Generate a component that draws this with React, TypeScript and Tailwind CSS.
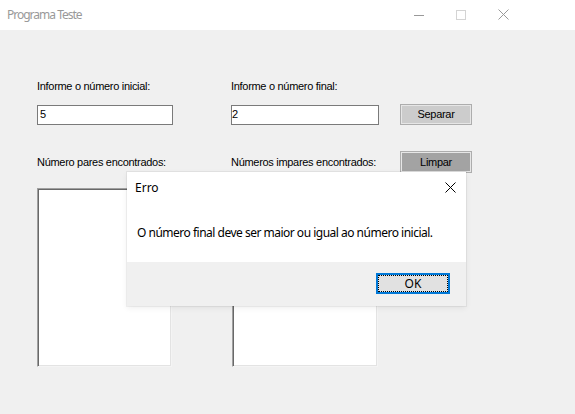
import React from "react";

const sans = { fontFamily: '"Liberation Sans", Arial, sans-serif' };
const ui = { fontFamily: '"Noto Sans", "Open Sans", sans-serif' };

function WinButton({ label, dark }: { label: string; dark?: boolean }) {
  return (
    <div
      className={`w-[72px] flex items-center justify-center border border-[#adadad] shadow-[inset_0_0_0_1px_#e6e6e6] text-[11px] tracking-[-0.3px] text-black ${
        dark ? "h-[22px] bg-[#a3a3a3]" : "h-[21px] bg-[#cccccc]"
      }`}
    >
      {label}
    </div>
  );
}

function ListBox({ w }: { w: string }) {
  return (
    <div
      className={`${w} h-[179px] bg-white border border-t-[#a0a0a0] border-l-[#a0a0a0] border-r-[#f4f4f4] border-b-[#f4f4f4] shadow-[inset_1px_1px_0_#696969,inset_-1px_-1px_0_#e3e3e3]`}
    />
  );
}

export default function App() {
  return (
    <div className="relative w-[575px] h-[414px] bg-[#f0f0f0] overflow-hidden" style={sans}>
      {/* title bar */}
      <div className="h-[30px] bg-white flex items-center">
        <span className="pl-[7px] text-[12px] tracking-[-1px] text-[#999999]" style={ui}>
          Programa Teste
        </span>
        <div className="ml-auto mr-[51px] flex h-full">
          <div className="w-[42px] h-full flex items-center justify-center">
            <div className="w-[10px] h-px bg-[#999999]" />
          </div>
          <div className="w-[42px] h-full flex items-center justify-center">
            <div className="w-[10px] h-[10px] border border-[#d4d4d4] mt-[-1px]" />
          </div>
          <div className="w-[42px] h-full flex items-center justify-center">
            <svg width="11" height="11" viewBox="0 0 11 11" className="mt-[-1px]">
              <path d="M0.5 0.5L10.5 10.5M10.5 0.5L0.5 10.5" stroke="#999999" strokeWidth="1" />
            </svg>
          </div>
        </div>
      </div>

      {/* form body */}
      <div className="pl-[37px] pt-[50px]">
        <div className="flex text-[11px] tracking-[-0.3px] text-black leading-[13px]">
          <div className="w-[194px]">Informe o número inicial:</div>
          <div>Informe o número final:</div>
        </div>
        <div className="flex items-center mt-[11px] h-[21px]">
          <div className="w-[136px] h-[20px] bg-white border border-[#7a7a7a] flex items-center pl-[2px] text-[11px] text-black">
            5
          </div>
          <div className="w-[148px] h-[20px] ml-[58px] bg-white border border-[#7a7a7a] flex items-center text-[11px] text-black">
            2
          </div>
          <div className="ml-[21px]">
            <WinButton label="Separar" />
          </div>
        </div>
        <div className="flex items-center mt-[26px] h-[22px] text-[11px] tracking-[-0.3px] text-black">
          <div className="w-[194px]">Número pares encontrados:</div>
          <div className="w-[169px]">Números impares encontrados:</div>
          <WinButton label="Limpar" dark />
        </div>
        <div className="flex mt-[15px]">
          <ListBox w="w-[135px]" />
          <div className="ml-[60px]">
            <ListBox w="w-[146px]" />
          </div>
        </div>
      </div>

      {/* error dialog */}
      <div
        className="absolute left-[127px] top-[172px] w-[339px] h-[134px] flex flex-col bg-white shadow-[0_0_0_1px_rgba(0,0,0,0.05),0_2px_6px_rgba(0,0,0,0.07)]"
        style={ui}
      >
        <div className="h-[90px] bg-white relative">
          <div className="flex items-center h-[31px] pl-[8px] pr-[10px]">
            <span className="text-[12px] text-black">Erro</span>
            <svg width="11" height="11" viewBox="0 0 11 11" className="ml-auto">
              <path d="M0.5 0.5L10.5 10.5M10.5 0.5L0.5 10.5" stroke="#000" strokeWidth="1" />
            </svg>
          </div>
          <div className="pl-[10px] pt-[22px] text-[12px] tracking-[-0.5px] text-black leading-[16px]">
            O número final deve ser maior ou igual ao número inicial.
          </div>
        </div>
        <div className="flex-1 bg-[#f0f0f0] flex justify-end items-start pt-[11px] pr-[16px]">
          <div className="w-[74px] h-[21px] border-2 border-[#0078d7] bg-[#e1e1e1] flex">
            <div className="flex-1 border border-dotted border-black flex items-center justify-center text-[12px] text-black">
              OK
            </div>
          </div>
        </div>
      </div>
    </div>
  );
}
